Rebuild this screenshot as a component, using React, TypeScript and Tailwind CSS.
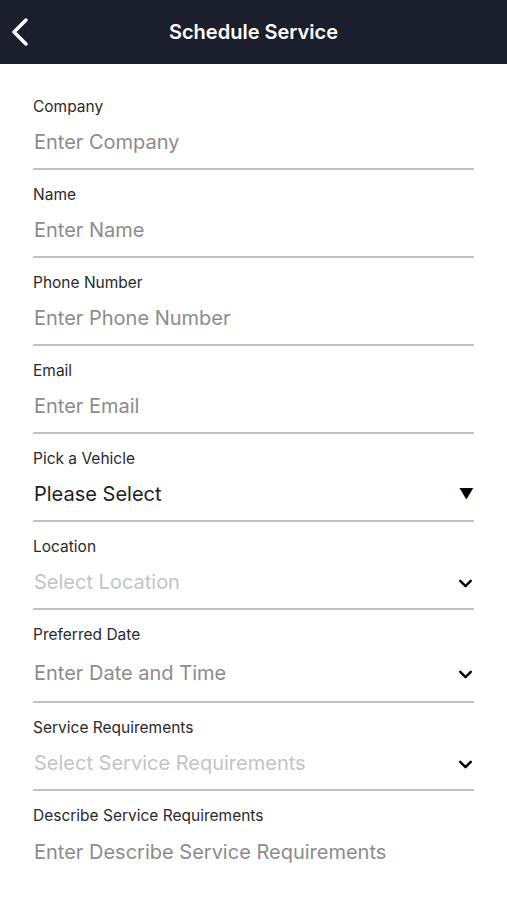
import { ChevronDown } from "lucide-react";

type Field = {
  label: string;
  placeholder: string;
  kind: "input" | "vehicle" | "select" | "date" | "textarea";
};

const fields: Field[] = [
  { label: "Company", placeholder: "Enter Company", kind: "input" },
  { label: "Name", placeholder: "Enter Name", kind: "input" },
  { label: "Phone Number", placeholder: "Enter Phone Number", kind: "input" },
  { label: "Email", placeholder: "Enter Email", kind: "input" },
  { label: "Pick a Vehicle", placeholder: "Please Select", kind: "vehicle" },
  { label: "Location", placeholder: "Select Location", kind: "select" },
  { label: "Preferred Date", placeholder: "Enter Date and Time", kind: "date" },
  {
    label: "Service Requirements",
    placeholder: "Select Service Requirements",
    kind: "select",
  },
  {
    label: "Describe Service Requirements",
    placeholder: "Enter Describe Service Requirements",
    kind: "textarea",
  },
];

function FormField({ field }: { field: Field }) {
  const textColor =
    field.kind === "vehicle"
      ? "text-[#1e1e1e]"
      : field.kind === "select"
      ? "text-[#c4c4c4]"
      : "text-[#8c8c8c]";
  const height = field.kind === "date" ? "h-[59px]" : "h-[54px]";
  const border =
    field.kind === "textarea" ? "" : "border-b-2 border-[#c2c2c2]";

  return (
    <div className="flex flex-col">
      <span className="text-[15.5px] leading-[18px] text-[#2a2a2a]">
        {field.label}
      </span>
      <div className={`flex items-center justify-between ${height} ${border}`}>
        <span className={`text-[20px] pl-[1px] ${textColor}`}>
          {field.placeholder}
        </span>
        {field.kind === "vehicle" && (
          <span className="text-[15px] text-black">▼</span>
        )}
        {(field.kind === "select" || field.kind === "date") && (
          <ChevronDown
            className="text-black -mr-[2px] mt-[3px]"
            size={21}
            strokeWidth={2.75}
          />
        )}
      </div>
    </div>
  );
}

export default function App() {
  return (
    <main
      className="w-[507px] h-[900px] bg-white overflow-hidden"
      style={{ fontFamily: "Inter, 'Liberation Sans', sans-serif" }}
    >
      <header className="h-[64px] bg-[#1b1e2c] flex items-center relative">
        <svg
          className="absolute left-0 top-0"
          width="40"
          height="64"
          viewBox="0 0 40 64"
          fill="none"
        >
          <polyline
            points="26,20 14,32 26,44"
            stroke="white"
            strokeWidth="3.5"
            strokeLinecap="round"
            strokeLinejoin="round"
          />
        </svg>
        <h1 className="w-full text-center text-white text-[20px] font-semibold">
          Schedule Service
        </h1>
      </header>
      <form className="flex flex-col gap-4 pt-[34px] pl-[33px] pr-[33px]">
        {fields.map((field) => (
          <FormField key={field.label} field={field} />
        ))}
      </form>
    </main>
  );
}
